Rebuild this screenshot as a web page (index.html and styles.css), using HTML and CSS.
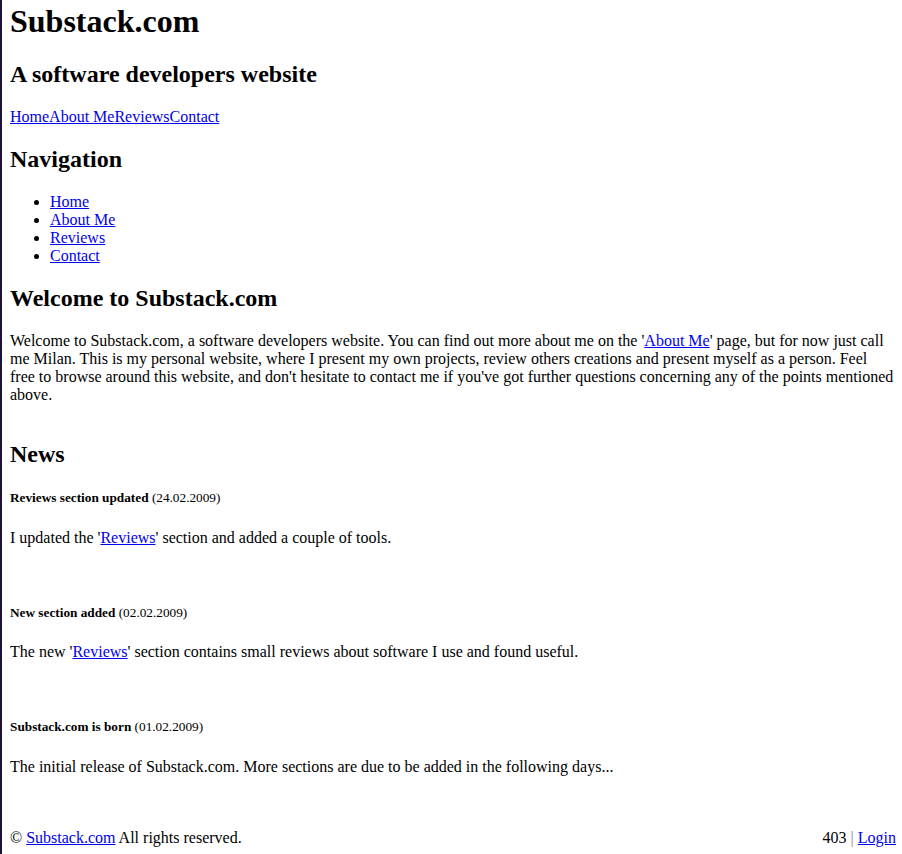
FILE: index.html
```html
<!DOCTYPE html>
<html lang="en">
<head>
  <meta charset="UTF-8" />
  <meta name="viewport" content="width=device-width, initial-scale=1.0" />
  <title>Substack.com</title>
  <link rel="stylesheet" href="styles.css">
</head>

<body>
  <div class="header">
    <h1>Substack.com</h1>
    <h2>A software developers website</h2>
    <div class="topnav"><a href="#">Home</a><a href="#">About Me</a><a href="#">Reviews</a><a href="#">Contact</a></div>
  </div>

  <h2>Navigation</h2>
  <ul class="menu">
    <li><a href="#">Home</a></li>
    <li><a href="#">About Me</a></li>
    <li><a href="#">Reviews</a></li>
    <li><a href="#">Contact</a></li>
  </ul>

  <h2>Welcome to Substack.com</h2>
  <p class="intro">Welcome to Substack.com, a software developers website. You can find out more about me on the '<a href="#">About Me</a>' page, but for now just call me Milan. This is my personal website, where I present my own projects, review others creations and present myself as a person. Feel free to browse around this website, and don't hesitate to contact me if you've got further questions concerning any of the points mentioned above.</p>

  <h2>News</h2>
  <div class="news">
    <h5>Reviews section updated <span class="date">(24.02.2009)</span></h5>
    <p class="news-text">I updated the '<a href="#">Reviews</a>' section and added a couple of tools.</p>

    <h5>New section added <span class="date">(02.02.2009)</span></h5>
    <p class="news-text">The new '<a href="#">Reviews</a>' section contains small reviews about software I use and found useful.</p>

    <h5>Substack.com is born <span class="date">(01.02.2009)</span></h5>
    <p class="news-text">The initial release of Substack.com. More sections are due to be added in the following days...</p>
  </div>

  <div class="footer">
    <span>&copy; <a href="#">Substack.com</a> All rights reserved.</span>
    <span>403 <span class="sep">|</span> <a href="#">Login</a></span>
  </div>
</body>
</html>
```

FILE: styles.css
```css
html {
  border-left: 2px solid #1e1238;
  background: #fff;
}

body {
  margin: 0 6px 8px 8px;
  color: #000;
  font-family: 'Liberation Serif', 'Times New Roman', serif;
  font-size: 16px;
  line-height: 18px;
}

a {
  color: #0000ee;
}

h1 {
  font-size: 32px;
  line-height: 37px;
  margin: 3px 0 21.44px;
}

h2 {
  font-size: 24px;
  line-height: 27px;
  margin: 19.92px 0;
}

h5 {
  font-size: 13.28px;
  line-height: 15px;
  margin: 22.18px 0 23.5px;
}

.date {
  font-weight: normal;
}

.topnav {
  margin: 0;
}

.menu {
  margin: 16px 0;
  padding-left: 40px;
}

p {
  margin: 16px 0;
}

.intro {
  padding-bottom: 17px;
}

.news-text {
  padding-bottom: 36px;
}

.footer {
  display: flex;
  justify-content: space-between;
  margin-top: 17px;
}

.sep {
  color: #888;
}
```
